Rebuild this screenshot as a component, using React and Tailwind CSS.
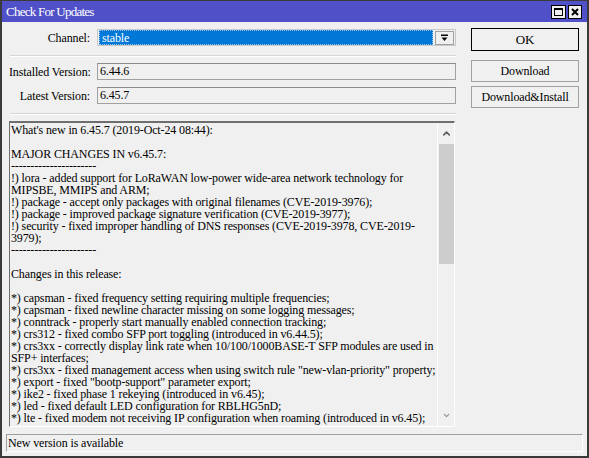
import { ChevronUp, ChevronDown } from 'lucide-react'

const lines = [
  "What's new in 6.45.7 (2019-Oct-24 08:44):",
  '',
  'MAJOR CHANGES IN v6.45.7:',
  '----------------------',
  '!) lora - added support for LoRaWAN low-power wide-area network technology for',
  'MIPSBE, MMIPS and ARM;',
  '!) package - accept only packages with original filenames (CVE-2019-3976);',
  '!) package - improved package signature verification (CVE-2019-3977);',
  '!) security - fixed improper handling of DNS responses (CVE-2019-3978, CVE-2019-',
  '3979);',
  '----------------------',
  '',
  'Changes in this release:',
  '',
  '*) capsman - fixed frequency setting requiring multiple frequencies;',
  '*) capsman - fixed newline character missing on some logging messages;',
  '*) conntrack - properly start manually enabled connection tracking;',
  '*) crs312 - fixed combo SFP port toggling (introduced in v6.44.5);',
  '*) crs3xx - correctly display link rate when 10/100/1000BASE-T SFP modules are used in',
  'SFP+ interfaces;',
  '*) crs3xx - fixed management access when using switch rule "new-vlan-priority" property;',
  '*) export - fixed "bootp-support" parameter export;',
  '*) ike2 - fixed phase 1 rekeying (introduced in v6.45);',
  '*) led - fixed default LED configuration for RBLHG5nD;',
  '*) lte - fixed modem not receiving IP configuration when roaming (introduced in v6.45);',
]

function Field({ label, value }) {
  return (
    <div className="flex items-center h-[17px]">
      <div className="w-[82px] text-right pr-px whitespace-nowrap">{label}</div>
      <div className="ml-[6px] flex-1 h-full border border-[#a0a0a0] border-t-[#8c8c8c] bg-[#f0f0f0] pl-[2px] leading-[15px]">
        {value}
      </div>
    </div>
  )
}

function Separator() {
  return <div className="h-[2px] ml-px border-t border-[#d7d7d7] border-b border-b-white" />
}

function Button({ children, primary, className }) {
  return (
    <button
      className={`w-[108px] bg-[#f0f0f0] flex items-center justify-center ${primary ? 'border border-black' : 'border border-[#a0a0a0]'} ${className}`}>
      {children}
    </button>
  )
}

export default function App() {
  return (
    <div
      className="w-[589px] h-[458px] box-border bg-[#f0f0f0] border-x-2 border-b-2 border-t border-[#3a3a3a] flex flex-col text-[12px] tracking-[-0.13px] text-black overflow-hidden"
      style={{ fontFamily: '"Liberation Serif", "Times New Roman", serif' }}>
      {/* Title bar */}
      <div className="h-[21px] bg-[#5050c8] flex items-center justify-between pl-[4px] pr-[5px]">
        <span className="text-white text-[13px] tracking-[-0.75px] leading-none">Check For Updates</span>
        <div className="flex items-center gap-[2px]">
          <div className="w-[15px] h-[14px] bg-[#f0f0f0] border border-black flex items-center justify-center">
            <div className="w-[9px] h-[8px] border border-black border-t-2" />
          </div>
          <div className="w-[14px] h-[14px] bg-[#f0f0f0] border border-black flex items-center justify-center">
            <svg width="8" height="8" viewBox="0 0 8 8">
              <path d="M1 1L7 7M7 1L1 7" stroke="black" strokeWidth="2" />
            </svg>
          </div>
        </div>
      </div>

      {/* Top section */}
      <div className="flex items-start pl-[7px]">
        <div className="w-[447px]">
          <div className="mt-[7px] flex items-center h-[17px]">
            <div className="w-[82px] text-right pr-px">Channel:</div>
            <div className="ml-[6px] flex-1 h-full flex items-center gap-[2px] border border-[#c8c8c8] p-px">
              <div className="flex-1 h-[15px] bg-[#0078d7] text-white pl-[2px] leading-[14px] border border-dotted border-[#9cc6f0]">
                stable
              </div>
              <div className="w-[19px] h-[14px] border border-[#a0a0a0] flex items-center justify-center">
                <svg width="7" height="8" viewBox="0 0 7 8">
                  <rect x="0" y="0.5" width="7" height="1.5" fill="black" />
                  <path d="M0.5 3.5H6.5L3.5 7Z" fill="black" />
                </svg>
              </div>
            </div>
          </div>
          <div className="mt-[9px]"><Separator /></div>
          <div className="mt-[6px]"><Field label="Installed Version:" value="6.44.6" /></div>
          <div className="mt-[7px]"><Field label="Latest Version:" value="6.45.7" /></div>
          <div className="mt-[9px]"><Separator /></div>
        </div>
        <div className="ml-[15px] flex flex-col">
          <Button primary className="mt-[6px] h-[23px] text-[13px]">OK</Button>
          <Button className="mt-[9px] h-[22px]">Download</Button>
          <Button className="mt-[4px] h-[22px]">Download&amp;Install</Button>
        </div>
      </div>

      {/* Changelog */}
      <div className="mt-[6px] ml-[7px] w-[446px] h-[306px] flex border-t-2 border-l border-[#6e6e6e] border-r border-r-white border-b border-b-white">
        <div className="flex-1 overflow-hidden pl-[1px] pt-[1px] leading-[12px]">
          {lines.map((l, i) => (
            <div key={i} className="whitespace-pre h-[12px]">{l || ' '}</div>
          ))}
        </div>
        <div className="w-[17px] border-l border-white flex flex-col items-center">
          <ChevronUp size={11} strokeWidth={3.5} className="text-[#606060] mt-[5px]" />
          <div className="w-[15px] h-[120px] bg-[#cdcdcd] mt-[5px]" />
          <div className="flex-1" />
          <ChevronDown size={9} strokeWidth={3} className="text-[#909090] mb-[6px]" />
        </div>
      </div>

      {/* Status bar */}
      <div className="mt-[7px] ml-[4px] w-[577px] h-[18px] border-t border-l border-[#a0a0a0] border-r border-r-white border-b border-b-white pl-[1px] leading-[16px]">
        New version is available
      </div>
    </div>
  )
}
